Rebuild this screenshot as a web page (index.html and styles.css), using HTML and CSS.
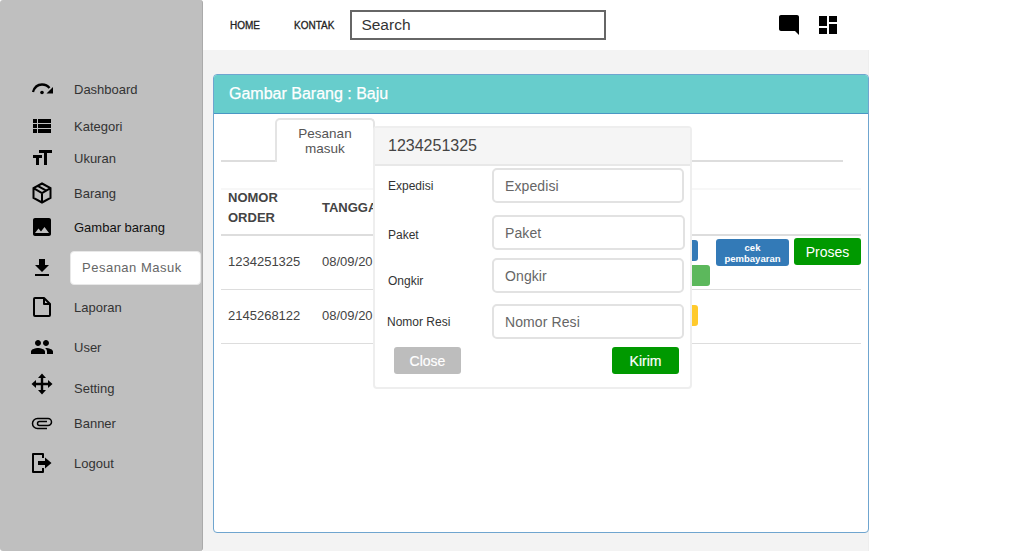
FILE: index.html
```html
<!DOCTYPE html>
<html lang="en">
<head>
    <meta charset="UTF-8">
    <title>Pesanan Masuk</title>
    <link rel="stylesheet" href="styles.css">
</head>
<body>

<div class="app">
    <aside class="sidebar">
        <div class="side-item">
            <svg class="side-icon" viewBox="0 0 24 24"><path d="M3 15C4.500 10 8 7.500 12 7.500c3.500 0 6 1.500 7.500 3.500" fill="none" stroke="#000" stroke-width="2.300"/><path d="M23 10v6.500h-6.500z"/><circle cx="12" cy="15.500" r="1.800"/></svg>
            <a class="side-link">Dashboard</a>
        </div>
        <div class="side-item">
            <svg class="side-icon" viewBox="0 0 24 24"><path d="M3 14h4v-4H3v4zm0 5h4v-4H3v4zM3 9h4V5H3v4zm5 5h13v-4H8v4zm0 5h13v-4H8v4zM8 5v4h13V5H8z"/></svg>
            <a class="side-link">Kategori</a>
        </div>
        <div class="side-item">
            <svg class="side-icon" viewBox="0 0 24 24"><path d="M9 4v3h5v12h3V7h5V4H9zm-6 8h3v7h3v-7h3V9H3v3z"/></svg>
            <a class="side-link">Ukuran</a>
        </div>
        <div class="side-item">
            <svg class="side-icon" viewBox="0 0 24 24"><path d="M12 2.500l8.500 4.700v9.600L12 21.500l-8.500-4.700V7.200zM3.500 7.200l8.500 4.800 8.500-4.800M12 12v9.500M7.700 4.900l8.500 4.800" fill="none" stroke="#000" stroke-width="2"/></svg>
            <a class="side-link">Barang</a>
        </div>
        <div class="side-item">
            <svg class="side-icon" viewBox="0 0 24 24"><path d="M21 19V5c0-1.100-.9-2-2-2H5c-1.100 0-2 .9-2 2v14c0 1.100.9 2 2 2h14c1.100 0 2-.9 2-2zM8.500 13.500l2.500 3.010L14.500 12l4.500 6H5l3.500-4.500z"/></svg>
            <a class="side-link side-link-dark">Gambar barang</a>
        </div>
        <div class="side-item">
            <svg class="side-icon" viewBox="0 0 24 24"><path d="M19 9h-4V3H9v6H5l7 7 7-7zM5 18v2h14v-2H5z"/></svg>
            <a class="side-link side-link-active">Pesanan Masuk</a>
        </div>
        <div class="side-item">
            <svg class="side-icon" viewBox="0 0 24 24"><path d="M14 3H5c-.6 0-1 .4-1 1v16c0 .6.4 1 1 1h14c.6 0 1-.4 1-1V9zM14 3v6h6" fill="none" stroke="#000" stroke-width="2" stroke-linejoin="round"/></svg>
            <a class="side-link">Laporan</a>
        </div>
        <div class="side-item">
            <svg class="side-icon" viewBox="0 0 24 24"><path d="M16 11c1.660 0 2.990-1.340 2.990-3S17.660 5 16 5c-1.660 0-3 1.340-3 3s1.340 3 3 3zm-8 0c1.660 0 2.990-1.340 2.990-3S9.660 5 8 5C6.340 5 5 6.340 5 8s1.340 3 3 3zm0 2c-2.330 0-7 1.170-7 3.500V19h14v-2.500c0-2.330-4.670-3.500-7-3.500zm8 0c-.29 0-.62.02-.97.05 1.160.84 1.970 1.970 1.970 3.450V19h6v-2.500c0-2.330-4.670-3.500-7-3.500z"/></svg>
            <a class="side-link">User</a>
        </div>
        <div class="side-item">
            <svg class="side-icon" viewBox="0 0 24 24"><path d="M12 4v16M4 12h16" fill="none" stroke="#000" stroke-width="2.400"/><path d="M12 1.500l4 4.500H8zM12 22.500L8 18h8zM1.500 12L6 8v8zM22.500 12L18 16V8z"/></svg>
            <a class="side-link side-link-low">Setting</a>
        </div>
        <div class="side-item">
            <svg class="side-icon" viewBox="0 0 24 24"><path d="M17 17.500H7.500a5 5 0 0 1 0-10H18a3.500 3.500 0 0 1 0 7H9.500a2 2 0 0 1 0-4H17" fill="none" stroke="#000" stroke-width="1.500"/></svg>
            <a class="side-link">Banner</a>
        </div>
        <div class="side-item">
            <svg class="side-icon" viewBox="0 0 24 24"><path d="M13 7V3H3v18h10v-4" fill="none" stroke="#000" stroke-width="2" stroke-linejoin="round"/><path d="M8 10h7V6.500l6.500 5.500-6.500 5.500V14H8z"/></svg>
            <a class="side-link">Logout</a>
        </div>
    </aside>

    <div class="main">
        <header class="topbar">
            <nav class="top-nav">
                <a>HOME</a>
                <a>KONTAK</a>
            </nav>
            <input class="search" type="text" placeholder="Search">
            <div class="top-icons">
                <svg class="chat-icon" viewBox="2 2 20 20"><path d="M20 2H4c-1.100 0-2 .9-2 2v12c0 1.100.9 2 2 2h14l4 4V4c0-1.100-.9-2-2-2z"/></svg>
                <svg class="grid-icon" viewBox="3 3 18 18"><path d="M3 13h8V3H3v10zm0 8h8v-6H3v6zm10 0h8V11h-8v10zm0-18v6h8V3h-8z"/></svg>
            </div>
        </header>

        <div class="content">
            <section class="panel">
                <div class="panel-heading">Gambar Barang : Baju</div>
                <div class="panel-body">
                    <div class="tabs">
                        <div class="tab">Pesanan<br>masuk</div>
                    </div>

                    <div class="order-table">
                        <div class="order-head">
                            <div class="col-order">NOMOR<br>ORDER</div>
                            <div class="col-date">TANGGAL</div>
                        </div>
                        <div class="order-row">
                            <div class="col-order">1234251325</div>
                            <div class="col-date">08/09/2019</div>
                            <div class="col-actions">
                                <div class="stack">
                                    <button class="btn btn-info btn-short">Detail</button>
                                    <button class="btn btn-paid">Bayar</button>
                                </div>
                                <button class="btn btn-info btn-check">cek pembayaran</button>
                                <button class="btn btn-process">Proses</button>
                            </div>
                        </div>
                        <div class="order-row">
                            <div class="col-order">2145268122</div>
                            <div class="col-date">08/09/2019</div>
                            <div class="col-actions col-actions-pending">
                                <button class="btn btn-pending">Pending</button>
                            </div>
                        </div>
                    </div>
                </div>
            </section>

            <div class="modal">
                <div class="modal-title">1234251325</div>
                <div class="modal-body">
                    <div class="field field-expedisi">
                        <label>Expedisi</label>
                        <input type="text" placeholder="Expedisi">
                    </div>
                    <div class="field field-paket">
                        <label>Paket</label>
                        <input type="text" placeholder="Paket">
                    </div>
                    <div class="field field-ongkir">
                        <label>Ongkir</label>
                        <input type="text" placeholder="Ongkir">
                    </div>
                    <div class="field field-resi">
                        <label>Nomor Resi</label>
                        <input type="text" placeholder="Nomor Resi">
                    </div>
                    <div class="modal-actions">
                        <button class="btn btn-close">Close</button>
                        <button class="btn btn-send">Kirim</button>
                    </div>
                </div>
            </div>
        </div>
    </div>
</div>

</body>
</html>
```

FILE: styles.css
```css
* {
    box-sizing: border-box;
}
body {
    font-family: "Liberation Sans", Arial, sans-serif;
    background-color: #fff;
    color: #333;
    margin: 0;
    overflow: hidden;
}
.app {
    display: flex;
    width: 869px;
    height: 551px;
}

/* sidebar */
.sidebar {
    flex: 0 0 203px;
    height: 551px;
    padding-top: 77px;
    background-color: #bfbfbf;
    border-right: 1px solid #aaa;
    border-radius: 3px;
    display: grid;
    /* distance from one icon to the next */
    grid-template-rows: 37px 32px 35px 34px 41px 39px 40px 37px 39px 40px 24px;
    align-content: start;
}
.side-item {
    display: flex;
    align-items: center;
    height: 24px;
    padding-left: 30px;
}
.side-icon {
    width: 24px;
    height: 24px;
    flex: none;
}
.side-link {
    margin-left: 20px;
    font-size: 13px;
    color: #333;
}
.side-link-dark {
    color: #111;
}
.side-link-low {
    margin-top: 8px;
}
.side-link-active {
    flex: none;
    margin-left: 16px;
    width: 131px;
    height: 34px;
    line-height: 32px;
    padding-left: 11px;
    letter-spacing: 0.5px;
    color: #666;
    background-color: #fff;
    border: 1px solid #e8e8e8;
    border-radius: 4px;
}

/* top bar */
.main {
    flex: 1;
    min-width: 0;
}
.topbar {
    height: 50px;
    display: flex;
    align-items: center;
    background-color: #fff;
}
.top-nav {
    display: flex;
    gap: 34px;
    padding-left: 27px;
    font-size: 10px;
    -webkit-text-stroke: 0.3px #222;
    color: #222;
}
.search {
    margin-left: 16px;
    width: 256px;
    height: 30px;
    padding: 0 9px;
    border: 2px solid #666;
    font-family: inherit;
    font-size: 15.5px;
}
.search::placeholder {
    color: #333;
    opacity: 1;
}
.top-icons {
    display: flex;
    align-items: center;
    gap: 20px;
    margin-left: 173px;
}
.chat-icon {
    width: 20px;
    height: 20px;
}
.grid-icon {
    width: 18px;
    height: 18px;
}

/* content */
.content {
    position: relative;
    height: 501px;
    padding: 24px 0 0 10px;
    background-color: #f3f3f3;
    border-right: 1px solid #eee;
}
.panel {
    width: 656px;
    height: 459px;
    background-color: #fff;
    border: 1px solid #6fa5cf;
    border-radius: 4px;
}
.panel-heading {
    height: 39px;
    line-height: 38px;
    padding-left: 15px;
    font-size: 16px;
    -webkit-text-stroke: 0.25px #fff;
    color: #fff;
    background-color: #67cdcc;
    border-bottom: 1px solid #4a97c4;
    border-radius: 3px 3px 0 0;
}
.panel-body {
    padding: 4px 7px 0;
}
.tabs {
    width: 622px;
    height: 44px;
    padding-left: 54px;
    border-bottom: 2px solid #ddd;
}
.tab {
    width: 100px;
    height: 44px;
    padding-top: 6px;
    font-size: 13.5px;
    line-height: 15px;
    text-align: center;
    color: #555;
    background-color: #fff;
    border: 2px solid #e4e4e4;
    border-bottom: 0;
    border-radius: 5px 5px 0 0;
}

/* orders */
.order-table {
    width: 640px;
    margin-top: 26px;
    font-size: 13px;
    border-top: 2px solid #f7f7f7;
}
.order-head {
    display: flex;
    align-items: center;
    height: 46px;
    padding-bottom: 9px;
    font-weight: bold;
    line-height: 20px;
    color: #444;
    border-bottom: 2px solid #ddd;
}
.order-row {
    display: flex;
    height: 54px;
    padding-top: 18px;
    color: #444;
    border-bottom: 1px solid #ddd;
}
.col-order {
    width: 101px;
    padding-left: 7px;
}
.col-date {
    width: 90px;
}
.col-actions {
    display: flex;
    align-items: flex-start;
    margin-left: auto;
    gap: 5px;
    margin-top: -16px;
}
.col-actions-pending {
    margin-top: -3px;
    padding-right: 163px;
}
.stack {
    display: flex;
    flex-direction: column;
    gap: 4px;
    width: 71px;
    padding-top: 2px;
}
.btn {
    font-family: inherit;
    color: #fff;
    border: 0;
    border-radius: 3px;
    padding: 0;
}
.btn-info {
    background-color: #337ab7;
}
.btn-short {
    width: 58px;
    height: 21px;
    font-size: 11px;
}
.btn-paid {
    width: 70px;
    height: 21px;
    padding-left: 8px;
    font-size: 11px;
    text-align: left;
    background-color: #5cb85c;
}
.btn-pending {
    width: 58px;
    height: 21px;
    font-size: 11px;
    background-color: #ffca2c;
}
.btn-check {
    width: 73px;
    height: 27px;
    margin-top: 1px;
    padding: 0 6px;
    font-size: 9.5px;
    font-weight: bold;
    line-height: 11px;
}
.btn-process {
    width: 67px;
    height: 27px;
    font-size: 14px;
    background-color: #009900;
}

/* modal over the table */
.modal {
    position: absolute;
    left: 170px;
    top: 76px;
    width: 319px;
    height: 263px;
    background-color: #fff;
    border: 2px solid #eee;
    border-radius: 4px;
}
.modal-title {
    height: 38px;
    line-height: 36px;
    padding-left: 13px;
    font-size: 16px;
    color: #444;
    background-color: #f5f5f5;
    border-bottom: 2px solid #e8e8e8;
}
.modal-body {
    padding-top: 2px;
}
.field {
    display: flex;
    align-items: flex-start;
    height: 36px;
    padding-left: 13px;
}
.field label {
    width: 104px;
    font-size: 12px;
    color: #333;
}
.field input {
    width: 192px;
    height: 35px;
    padding: 0 11px;
    font-family: inherit;
    font-size: 14px;
    letter-spacing: 0.1px;
    background-color: #fff;
    border: 2px solid #e2e2e2;
    border-radius: 5px;
}
.field input::placeholder {
    color: #666;
    opacity: 1;
}
.field-expedisi label {
    padding-top: 11px;
}
.field-paket {
    margin-top: 11px;
}
.field-paket label {
    padding-top: 13px;
}
.field-paket input {
    width: 193px;
}
.field-ongkir {
    margin-top: 7px;
}
.field-ongkir label {
    padding-top: 16px;
}
.field-resi {
    margin-top: 10px;
}
.field-resi label {
    margin-left: -1px;
    margin-right: 1px;
    padding-top: 11px;
}
.modal-actions {
    display: flex;
    justify-content: space-between;
    margin-top: 7px;
    padding: 0 11px 0 19px;
}
.btn-close,
.btn-send {
    width: 67px;
    height: 27px;
    font-size: 14px;
    -webkit-text-stroke: 0.2px #fff;
}
.btn-close {
    background-color: #bdbdbd;
}
.btn-send {
    background-color: #009900;
}
```
